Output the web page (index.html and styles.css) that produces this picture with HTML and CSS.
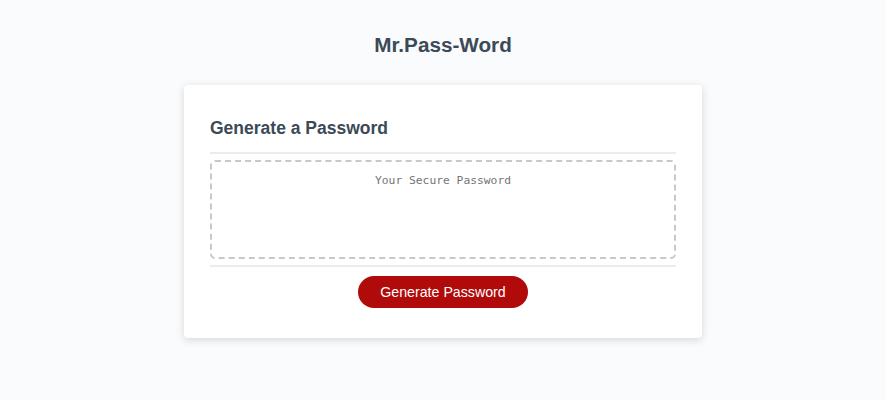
FILE: index.html
```html
<!DOCTYPE html>
<html lang="en">
<head>
<meta charset="UTF-8">
<title>Mr.Pass-Word</title>
<link rel="stylesheet" href="styles.css">
</head>
<body>
  <div class="wrapper">
    <h1 class="title">Mr.Pass-Word</h1>
    <div class="card">
      <div class="card-header">
        <h2 class="card-title">Generate a Password</h2>
      </div>
      <div class="card-body">
        <textarea class="password" readonly placeholder="Your Secure Password"></textarea>
      </div>
      <div class="card-footer">
        <button class="btn" type="button">Generate Password</button>
      </div>
    </div>
  </div>
</body>
</html>
```

FILE: styles.css
```css
* { box-sizing: border-box; }

html, body {
  margin: 0;
  padding: 0;
  height: 100%;
}

body {
  background: #f9fbfd;
  font-family: "Liberation Sans", Arial, sans-serif;
  color: #3b4a56;
}

.wrapper {
  padding-top: 31px;
}

.title {
  margin: 0;
  text-align: center;
  font-size: 20.7px;
  line-height: 28px;
  font-weight: bold;
  color: #3b4a56;
}

.card {
  width: 518px;
  margin: 26px auto 0;
  background: #ffffff;
  border-radius: 4px;
  box-shadow: 0 2px 8px rgba(0, 0, 0, 0.15);
  padding: 32px 26px 30px;
}

.card-header {
  padding-bottom: 13px;
  border-bottom: 2px solid #eaecee;
}

.card-title {
  margin: 0;
  font-size: 17.5px;
  line-height: 22px;
  font-weight: bold;
  color: #3b4a56;
}

.card-body {
  padding: 6px 0 6px;
  border-bottom: 2px solid #eaecee;
}

.password {
  display: block;
  width: 100%;
  height: 99px;
  margin: 0;
  padding: 12px 10px 10px;
  border: 2px dashed #c4c9ce;
  border-radius: 5px;
  resize: none;
  overflow: hidden;
  text-align: center;
  font-family: "DejaVu Sans Mono", "Liberation Mono", monospace;
  font-size: 11.3px;
  color: #3b4a56;
  background: #fff;
  outline: none;
}

.password::placeholder {
  color: #757575;
}

.card-footer {
  padding-top: 9px;
  display: flex;
  justify-content: center;
}

.btn {
  width: 170px;
  height: 32px;
  border: none;
  border-radius: 16px;
  background: #b00a0a;
  color: #ffffff;
  font-family: "Liberation Sans", Arial, sans-serif;
  font-size: 14.2px;
  line-height: 32px;
  padding: 0;
  cursor: pointer;
}
```
